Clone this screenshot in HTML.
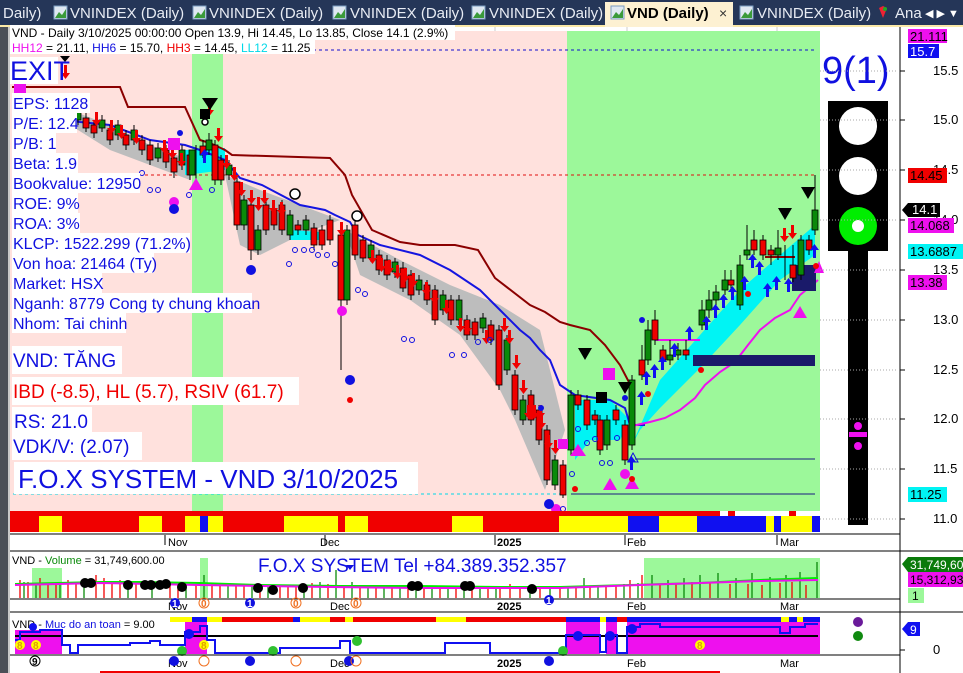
<!DOCTYPE html>
<html><head><meta charset="utf-8"><style>
html,body{margin:0;padding:0;background:#fff;}
body{width:963px;height:673px;overflow:hidden;position:relative;font-family:"Liberation Sans",sans-serif;}
svg{position:absolute;left:0;top:0;}
</style></head><body>
<svg width="963" height="673" viewBox="0 0 963 673" xmlns="http://www.w3.org/2000/svg" font-family="Liberation Sans, sans-serif">
<!-- tab bar -->
<rect x="0" y="0" width="963" height="26" fill="#253658"/>
<rect x="0" y="25" width="963" height="2" fill="#fbe9a8"/>
<g font-size="15" fill="#e8ecf4">
<text x="3" y="18">Daily)</text>
<text x="70" y="18">VNINDEX (Daily)</text>
<text x="209" y="18">VNINDEX (Daily)</text>
<text x="350" y="18">VNINDEX (Daily)</text>
<text x="489" y="18">VNINDEX (Daily)</text>
<text x="757" y="18">VNINDEX (Daily)</text>
<text x="895" y="18">Ana</text>
</g>
<g>
<rect x="54" y="6" width="13" height="13" fill="#dfe8f2" stroke="#7a9cc0"/><path d="M55 18 L59 12 L62 15 L66 9 L66 18Z" fill="#3a9a3a"/>
<rect x="193" y="6" width="13" height="13" fill="#dfe8f2" stroke="#7a9cc0"/><path d="M194 18 L198 12 L201 15 L205 9 L205 18Z" fill="#3a9a3a"/>
<rect x="333" y="6" width="13" height="13" fill="#dfe8f2" stroke="#7a9cc0"/><path d="M334 18 L338 12 L341 15 L345 9 L345 18Z" fill="#3a9a3a"/>
<rect x="472" y="6" width="13" height="13" fill="#dfe8f2" stroke="#7a9cc0"/><path d="M473 18 L477 12 L480 15 L484 9 L484 18Z" fill="#3a9a3a"/>
<rect x="740" y="6" width="13" height="13" fill="#dfe8f2" stroke="#7a9cc0"/><path d="M741 18 L745 12 L748 15 L752 9 L752 18Z" fill="#3a9a3a"/>
</g>
<rect x="605" y="2" width="128" height="25" fill="#fdf1d2"/>
<rect x="611" y="6" width="13" height="13" fill="#dfe8f2" stroke="#7a9cc0"/><path d="M612 18 L616 12 L619 15 L623 9 L623 18Z" fill="#3a9a3a"/>
<text x="627" y="18" font-size="15" font-weight="bold" fill="#000">VND (Daily)</text>
<text x="719" y="18" font-size="14" fill="#333">×</text>
<path d="M879 8 l4 -2 l4 2 l-4 10z" fill="#e23"/><circle cx="885" cy="9" r="2" fill="#2a2"/>
<text x="925" y="17" font-size="11" fill="#fff">◀ ▶ ▼</text>

<!-- left border -->
<rect x="0" y="27" width="8" height="646" fill="#4b4f57"/>
<rect x="8" y="27" width="2" height="646" fill="#c8c8c8"/>

<!-- main pane backgrounds -->
<rect x="10" y="31" width="557" height="480" fill="#ffe1dd"/>
<rect x="567" y="31" width="253" height="480" fill="#9cf89a"/>
<rect x="192" y="31" width="31" height="480" fill="#9cf89a"/>
<g stroke="#ccc" stroke-width="1"><line x1="265" y1="27" x2="265" y2="31"/><line x1="495" y1="27" x2="495" y2="31"/><line x1="627" y1="27" x2="627" y2="31"/><line x1="777" y1="27" x2="777" y2="31"/></g>

<!-- dashed lines -->
<line x1="175" y1="50" x2="815" y2="50" stroke="#1010d0" stroke-dasharray="3,3"/>
<line x1="145" y1="175" x2="815" y2="175" stroke="#e01010" stroke-dasharray="3,3"/>
<line x1="13" y1="494" x2="560" y2="494" stroke="#00d8e8" stroke-dasharray="3,3"/>
<line x1="635" y1="459" x2="815" y2="459" stroke="#1a1a80"/>
<line x1="571" y1="494" x2="815" y2="494" stroke="#1a1a80"/>

<!-- gray fills -->
<path d="M70 110 L110 125 L150 145 L190 160 L190 180 L150 165 L110 150 L70 125Z" fill="#bdbdbd"/>
<path d="M225 175 L260 190 L300 205 L340 220 L300 235 L260 255 L240 245Z" fill="#bdbdbd"/>
<path d="M345 230 L400 260 L450 285 L500 305 L540 330 L565 430 L545 490 L515 420 L500 390 L460 335 L410 300 L360 275Z" fill="#bdbdbd"/>
<!-- cyan fills -->
<path d="M575 400 L610 400 L630 420 L620 440 L590 440 L575 460Z" fill="#00f4f4"/>
<path d="M632 445 L660 380 L700 335 L740 290 L780 255 L815 225 L815 255 L780 280 L740 325 L700 368 L660 408 L640 430Z" fill="#00f4f4"/>
<path d="M185 150 L225 148 L225 170 L185 175Z" fill="#00f4f4"/>
<path d="M290 230 L320 232 L320 240 L290 240Z" fill="#00f4f4"/>

<!-- lines -->
<polyline fill="none" stroke="#8b0000" stroke-width="2" points="12,87 120,87 128,107 185,107 200,140 210,143 225,150 232,155 330,158 345,175 352,195 372,230 400,242 420,245 455,245 478,250 495,278 530,305 545,312 560,322 570,325 590,330 605,345 620,365 632,388"/>
<polyline fill="none" stroke="#1515e0" stroke-width="2" points="15,115 40,117 80,122 110,125 150,140 185,145 200,150 225,160 240,178 262,185 300,205 325,210 335,215 350,222 358,235 380,245 420,255 450,270 480,290 500,310 520,330 530,338 540,350 550,360 560,385 575,395 610,400 625,408 630,425 645,425"/>
<polyline fill="none" stroke="#ee10ee" stroke-width="2" points="632,426 650,422 665,418 680,410 695,398 705,385 720,372 735,362 748,345 760,330 775,318 790,310 800,295 812,285 818,280"/>
<line x1="655" y1="340" x2="700" y2="340" stroke="#ee10ee" stroke-width="2"/>
<line x1="765" y1="257" x2="795" y2="257" stroke="#8b0000" stroke-width="2"/>
<rect x="693" y="355" width="122" height="11" fill="#1a1a6a"/>
<rect x="792" y="265" width="24" height="26" fill="#1a1a6a"/>

<!-- wicks -->
<path stroke="#000" stroke-width="1" fill="none" d="M70 100V130M78 108V125M86 112V132M94 120V138M102 115V132M110 125V145M118 120V140M126 130V150M134 125V145M142 135V155M150 140V165M158 143V162M166 145V168M174 153V178M182 145V170M190 150V180M196 145V180M203 140V158M209 133V155M215 140V185M221 155V185M229 160V180M237 175V230M244 195V230M251 200V260M258 225V255M266 200V235M274 205V230M282 200V235M290 210V240M298 220V235M306 215V235M314 223V250M322 225V250M330 215V245M341 230V370M347 225V305M355 220V260M363 235V262M371 240V262M379 250V275M387 255V280M395 258V278M403 262V292M411 270V300M419 275V295M427 280V305M435 285V325M443 290V315M451 295V325M459 295V325M467 315V340M475 318V340M483 313V333M491 320V345M499 325V390M507 335V375M515 370V415M523 395V425M531 390V425M539 405V445M547 425V485M555 455V490M563 460V498M571 390V455M578 390V410M587 395V430M595 410V425M600 415V455M607 415V450M616 405V425M625 420V465M632 375V450M642 345V380M648 320V365M655 310V345M663 345V365M670 340V365M678 343V360M686 340V360M702 300V330M709 290V318M716 285V305M725 270V295M731 270V290M740 255V310M747 225V260M754 230V255M763 235V260M771 245V265M778 230V260M785 245V280M793 245V282M801 235V280M809 235V255M815 175V235"/>
<!-- red bodies -->
<g fill="#f00000" stroke="#000" stroke-width="0.8">
<rect x="67" y="108" width="6" height="17"/><rect x="83" y="118" width="6" height="10"/><rect x="91" y="125" width="6" height="8"/><rect x="107" y="130" width="6" height="10"/><rect x="123" y="135" width="6" height="10"/><rect x="139" y="140" width="6" height="10"/><rect x="147" y="145" width="6" height="15"/><rect x="163" y="150" width="6" height="12"/><rect x="171" y="158" width="6" height="14"/><rect x="187" y="155" width="6" height="20"/>
<rect x="200" y="146" width="6" height="9"/><rect x="212" y="145" width="6" height="35"/><rect x="218" y="160" width="6" height="20"/><rect x="234" y="182" width="6" height="43"/><rect x="248" y="205" width="6" height="45"/><rect x="263" y="205" width="6" height="25"/><rect x="271" y="210" width="6" height="15"/><rect x="279" y="205" width="6" height="25"/><rect x="295" y="225" width="6" height="5"/><rect x="311" y="228" width="6" height="17"/><rect x="319" y="230" width="6" height="15"/><rect x="327" y="220" width="6" height="20"/><rect x="338" y="235" width="6" height="65"/><rect x="352" y="225" width="6" height="30"/><rect x="360" y="240" width="6" height="18"/><rect x="376" y="255" width="6" height="15"/><rect x="384" y="260" width="6" height="15"/><rect x="400" y="268" width="6" height="20"/><rect x="408" y="275" width="6" height="20"/><rect x="424" y="285" width="6" height="15"/><rect x="432" y="290" width="6" height="30"/><rect x="448" y="300" width="6" height="20"/><rect x="464" y="320" width="6" height="15"/><rect x="472" y="322" width="6" height="13"/><rect x="488" y="325" width="6" height="15"/><rect x="496" y="330" width="6" height="55"/><rect x="512" y="375" width="6" height="35"/><rect x="528" y="395" width="6" height="25"/><rect x="536" y="410" width="6" height="30"/><rect x="544" y="430" width="6" height="50"/><rect x="560" y="465" width="6" height="30"/>
<rect x="575" y="395" width="6" height="10"/><rect x="584" y="400" width="6" height="25"/><rect x="592" y="415" width="6" height="5"/><rect x="597" y="420" width="6" height="30"/><rect x="613" y="410" width="6" height="10"/><rect x="622" y="425" width="6" height="35"/><rect x="639" y="360" width="6" height="15"/><rect x="652" y="320" width="6" height="20"/><rect x="660" y="350" width="6" height="10"/><rect x="683" y="350" width="6" height="5"/><rect x="728" y="280" width="6" height="5"/><rect x="751" y="240" width="6" height="10"/><rect x="760" y="240" width="6" height="15"/><rect x="768" y="250" width="6" height="5"/><rect x="790" y="265" width="6" height="13"/><rect x="806" y="240" width="6" height="10"/>
</g>
<!-- green bodies -->
<g fill="#0a8a0a" stroke="#000" stroke-width="0.8">
<rect x="75" y="112" width="6" height="8"/><rect x="99" y="120" width="6" height="8"/><rect x="115" y="125" width="6" height="10"/><rect x="131" y="130" width="6" height="10"/><rect x="155" y="148" width="6" height="10"/><rect x="179" y="150" width="6" height="15"/><rect x="189" y="150" width="6" height="25"/><rect x="206" y="140" width="6" height="10"/><rect x="226" y="165" width="6" height="10"/><rect x="241" y="200" width="6" height="25"/><rect x="255" y="230" width="6" height="20"/><rect x="287" y="215" width="6" height="20"/><rect x="303" y="220" width="6" height="10"/><rect x="344" y="230" width="6" height="70"/><rect x="368" y="245" width="6" height="13"/><rect x="392" y="262" width="6" height="10"/><rect x="416" y="280" width="6" height="10"/><rect x="440" y="295" width="6" height="15"/><rect x="456" y="300" width="6" height="20"/><rect x="480" y="318" width="6" height="10"/><rect x="504" y="340" width="6" height="30"/><rect x="520" y="400" width="6" height="20"/><rect x="552" y="460" width="6" height="25"/><rect x="568" y="395" width="6" height="55"/><rect x="604" y="420" width="6" height="25"/><rect x="629" y="380" width="6" height="65"/><rect x="645" y="330" width="6" height="30"/><rect x="667" y="355" width="6" height="5"/><rect x="675" y="350" width="6" height="5"/><rect x="699" y="310" width="6" height="15"/><rect x="706" y="300" width="6" height="10"/><rect x="713" y="292" width="6" height="8"/><rect x="722" y="280" width="6" height="10"/><rect x="737" y="265" width="6" height="40"/><rect x="744" y="250" width="6" height="5"/><rect x="775" y="248" width="6" height="7"/><rect x="798" y="240" width="6" height="35"/><rect x="812" y="210" width="6" height="20"/>
</g>
<!-- red arrows -->
<g fill="#f00000">
<path d="M64 65h3v8h3l-4.5 6l-4.5-6h3z"/>
<path d="M95 112h3v8h3l-4.5 6l-4.5-6h3z"/><path d="M110 120h3v8h3l-4.5 6l-4.5-6h3z"/><path d="M120 125h3v8h3l-4.5 6l-4.5-6h3z"/><path d="M135 130h3v8h3l-4.5 6l-4.5-6h3z"/><path d="M163 140h3v8h3l-4.5 6l-4.5-6h3z"/><path d="M171 145h3v8h3l-4.5 6l-4.5-6h3z"/><path d="M180 153h3v8h3l-4.5 6l-4.5-6h3z"/>
<path d="M217 128h3v8h3l-4.5 6l-4.5-6h3z"/><path d="M225 155h3v8h3l-4.5 6l-4.5-6h3z"/><path d="M233 167h3v8h3l-4.5 6l-4.5-6h3z"/><path d="M240 182h3v8h3l-4.5 6l-4.5-6h3z"/><path d="M250 190h3v8h3l-4.5 6l-4.5-6h3z"/><path d="M257 197h3v8h3l-4.5 6l-4.5-6h3z"/><path d="M263 190h3v8h3l-4.5 6l-4.5-6h3z"/><path d="M272 200h3v8h3l-4.5 6l-4.5-6h3z"/><path d="M280 202h3v8h3l-4.5 6l-4.5-6h3z"/>
<path d="M340 222h3v8h3l-4.5 6l-4.5-6h3z"/><path d="M371 250h3v8h3l-4.5 6l-4.5-6h3z"/><path d="M380 258h3v8h3l-4.5 6l-4.5-6h3z"/><path d="M388 260h3v8h3l-4.5 6l-4.5-6h3z"/><path d="M396 265h3v8h3l-4.5 6l-4.5-6h3z"/><path d="M404 268h3v8h3l-4.5 6l-4.5-6h3z"/><path d="M412 273h3v8h3l-4.5 6l-4.5-6h3z"/><path d="M425 282h3v8h3l-4.5 6l-4.5-6h3z"/><path d="M433 290h3v8h3l-4.5 6l-4.5-6h3z"/><path d="M445 300h3v8h3l-4.5 6l-4.5-6h3z"/><path d="M459 318h3v8h3l-4.5 6l-4.5-6h3z"/><path d="M466 320h3v8h3l-4.5 6l-4.5-6h3z"/><path d="M485 330h3v8h3l-4.5 6l-4.5-6h3z"/>
<path d="M503 318h3v8h3l-4.5 6l-4.5-6h3z"/><path d="M508 330h3v8h3l-4.5 6l-4.5-6h3z"/><path d="M515 355h3v8h3l-4.5 6l-4.5-6h3z"/><path d="M522 380h3v8h3l-4.5 6l-4.5-6h3z"/><path d="M527 405h3v8h3l-4.5 6l-4.5-6h3z"/><path d="M533 405h3v8h3l-4.5 6l-4.5-6h3z"/><path d="M539 405h3v8h3l-4.5 6l-4.5-6h3z"/><path d="M540 415h3v8h3l-4.5 6l-4.5-6h3z"/><path d="M547 435h3v8h3l-4.5 6l-4.5-6h3z"/><path d="M554 440h3v8h3l-4.5 6l-4.5-6h3z"/><path d="M208 102h3v8h3l-4.5 6l-4.5-6h3z"/>
<path d="M783 228h3v8h3l-4.5 6l-4.5-6h3z"/><path d="M791 225h3v8h3l-4.5 6l-4.5-6h3z"/>
</g>
<!-- blue arrows -->
<g fill="#1010f0">
<path d="M206 163h-3v-8h-3l4.5-6l4.5 6h-3z"/>
<path d="M643 405h-3v-8h-3l4.5-6l4.5 6h-3z"/><path d="M648 385h-3v-8h-3l4.5-6l4.5 6h-3z"/><path d="M656 378h-3v-8h-3l4.5-6l4.5 6h-3z"/><path d="M664 370h-3v-8h-3l4.5-6l4.5 6h-3z"/><path d="M676 357h-3v-8h-3l4.5-6l4.5 6h-3z"/><path d="M691 340h-3v-8h-3l4.5-6l4.5 6h-3z"/><path d="M708 330h-3v-8h-3l4.5-6l4.5 6h-3z"/><path d="M717 318h-3v-8h-3l4.5-6l4.5 6h-3z"/><path d="M725 308h-3v-8h-3l4.5-6l4.5 6h-3z"/><path d="M734 300h-3v-8h-3l4.5-6l4.5 6h-3z"/><path d="M746 290h-3v-8h-3l4.5-6l4.5 6h-3z"/><path d="M754 268h-3v-8h-3l4.5-6l4.5 6h-3z"/><path d="M761 275h-3v-8h-3l4.5-6l4.5 6h-3z"/><path d="M769 297h-3v-8h-3l4.5-6l4.5 6h-3z"/><path d="M778 290h-3v-8h-3l4.5-6l4.5 6h-3z"/><path d="M790 292h-3v-8h-3l4.5-6l4.5 6h-3z"/><path d="M816 258h-3v-8h-3l4.5-6l4.5 6h-3z"/><path d="M633 470h-3v-8h-3l4.5-6l4.5 6h-3z"/>
</g>
<!-- markers -->
<g fill="#ee10ee">
<rect x="14" y="83" width="12" height="12"/><rect x="168" y="138" width="12" height="12"/><rect x="603" y="368" width="12" height="12"/><rect x="558" y="439" width="10" height="10"/>
<path d="M196 178l-7 12h14z"/><path d="M578 444l-8 12h16z"/><path d="M610 478l-7 12h14z"/><path d="M632 477l-7 12h14z"/><path d="M800 306l-7 12h14z"/><path d="M819 261l-5 12h10z"/>
<circle cx="174" cy="202" r="5"/><circle cx="342" cy="311" r="5"/><circle cx="625" cy="474" r="5"/><circle cx="556" cy="509" r="5"/>
</g>
<g fill="#000">
<path d="M202 98h16l-8 12z"/><rect x="200" y="109" width="10" height="10"/>
<path d="M578 348h14l-7 12z"/><path d="M618 382h14l-7 12z"/><rect x="596" y="392" width="11" height="11"/>
<path d="M778 208h14l-7 12z"/><path d="M801 187h14l-7 12z"/>
<path d="M60 56h10l-5 6z"/>
</g>
<g fill="#fff" stroke="#000" stroke-width="1.5"><circle cx="295" cy="194" r="5"/><circle cx="357" cy="216" r="5"/><circle cx="205" cy="122" r="3"/></g>
<g fill="#1010e0"><circle cx="174" cy="209" r="5"/><circle cx="251" cy="270" r="5"/><circle cx="350" cy="380" r="5"/><circle cx="549" cy="504" r="5"/><circle cx="642" cy="320" r="3"/><circle cx="625" cy="398" r="3"/><circle cx="180" cy="133" r="3"/><circle cx="541" cy="408" r="3"/></g>
<g fill="#f00000"><circle cx="350" cy="400" r="3"/><circle cx="648" cy="394" r="3"/><circle cx="701" cy="370" r="3"/><circle cx="575" cy="489" r="3"/><circle cx="632" cy="479" r="3"/><circle cx="748" cy="294" r="3"/><circle cx="816" cy="266" r="3"/></g>
<g fill="none" stroke="#1010e0" stroke-width="1"><circle cx="150" cy="190" r="2.5"/><circle cx="158" cy="190" r="2.5"/><circle cx="142" cy="173" r="2.5"/><circle cx="189" cy="195" r="2.5"/><circle cx="212" cy="190" r="2.5"/><circle cx="295" cy="250" r="2.5"/><circle cx="304" cy="250" r="2.5"/><circle cx="312" cy="250" r="2.5"/><circle cx="289" cy="264" r="2.5"/><circle cx="318" cy="255" r="2.5"/><circle cx="327" cy="255" r="2.5"/><circle cx="335" cy="264" r="2.5"/><circle cx="358" cy="290" r="2.5"/><circle cx="365" cy="294" r="2.5"/><circle cx="404" cy="339" r="2.5"/><circle cx="412" cy="340" r="2.5"/><circle cx="452" cy="355" r="2.5"/><circle cx="464" cy="355" r="2.5"/><circle cx="478" cy="342" r="2.5"/><circle cx="490" cy="340" r="2.5"/><circle cx="578" cy="429" r="2.5"/><circle cx="587" cy="443" r="2.5"/><circle cx="595" cy="439" r="2.5"/><circle cx="602" cy="463" r="2.5"/><circle cx="610" cy="463" r="2.5"/><circle cx="572" cy="474" r="2.5"/><circle cx="617" cy="438" r="2.5"/><circle cx="563" cy="509" r="2.5"/></g>
<path d="M633 453l-5 9h10z" fill="none" stroke="#1010e0"/>

<!-- bottom color band -->
<rect x="10" y="511" width="710" height="21" fill="#f00000"/>
<rect x="720" y="516" width="100" height="16" fill="#f00000"/>
<rect x="728" y="511" width="7" height="5" fill="#f00000"/><rect x="789" y="511" width="7" height="5" fill="#f00000"/>
<g fill="#ffff00"><rect x="39" y="516" width="23" height="16"/><rect x="139" y="516" width="23" height="16"/><rect x="185" y="516" width="38" height="16"/><rect x="284" y="516" width="54" height="16"/><rect x="345" y="516" width="23" height="16"/><rect x="452" y="516" width="31" height="16"/><rect x="559" y="516" width="69" height="16"/><rect x="659" y="516" width="38" height="16"/><rect x="766" y="516" width="8" height="16"/><rect x="781" y="516" width="31" height="16"/></g>
<g fill="#1010f0"><rect x="200" y="516" width="8" height="16"/><rect x="628" y="516" width="31" height="16"/><rect x="697" y="516" width="69" height="16"/><rect x="774" y="516" width="7" height="16"/><rect x="812" y="516" width="8" height="16"/></g>
<line x1="10" y1="534" x2="900" y2="534" stroke="#000"/>
<g font-size="11" fill="#000"><text x="168" y="546">Nov</text><text x="320" y="546">Dec</text><text x="497" y="546" font-weight="bold">2025</text><text x="627" y="546">Feb</text><text x="780" y="546">Mar</text></g>
<g stroke="#000"><line x1="165" y1="535" x2="165" y2="545"/><line x1="325" y1="535" x2="325" y2="545"/><line x1="495" y1="535" x2="495" y2="545"/><line x1="625" y1="535" x2="625" y2="545"/><line x1="777" y1="535" x2="777" y2="545"/></g>
<line x1="10" y1="551" x2="963" y2="551" stroke="#000"/>

<!-- header text -->
<rect x="10" y="25" width="445" height="15" fill="#fff"/>
<text x="12" y="37" font-size="12" fill="#000">VND - Daily 3/10/2025 00:00:00 Open 13.9, Hi 14.45, Lo 13.85, Close 14.1 (2.9%)</text>
<rect x="10" y="40" width="305" height="14" fill="#fff"/>
<text x="12" y="52" font-size="12" fill="#000"><tspan fill="#ee10ee">HH12</tspan> = 21.11, <tspan fill="#1010e0">HH6</tspan> = 15.70, <tspan fill="#f00000">HH3</tspan> = 14.45, <tspan fill="#00d8e8">LL12</tspan> = 11.25</text>

<!-- info labels -->
<g fill="#fff">
<rect x="10" y="57" width="48" height="27"/>
<rect x="12" y="93" width="78" height="20"/><rect x="12" y="113" width="65" height="20"/><rect x="12" y="133" width="44" height="20"/><rect x="12" y="153" width="66" height="20"/><rect x="12" y="173" width="128" height="20"/><rect x="12" y="193" width="66" height="20"/><rect x="12" y="213" width="68" height="20"/><rect x="12" y="233" width="178" height="20"/><rect x="12" y="253" width="142" height="20"/><rect x="12" y="273" width="90" height="20"/><rect x="12" y="293" width="240" height="20"/><rect x="12" y="313" width="114" height="20"/>
<rect x="12" y="346" width="110" height="28"/><rect x="12" y="377" width="287" height="28"/><rect x="12" y="407" width="80" height="28"/><rect x="12" y="432" width="130" height="28"/><rect x="14" y="462" width="404" height="32"/>
</g>
<text x="10" y="80" font-size="27" fill="#1010e0">EXIT</text>
<g font-size="16" fill="#1010e0">
<text x="13" y="109">EPS: 1128</text><text x="13" y="129">P/E: 12.4</text><text x="13" y="149">P/B: 1</text><text x="13" y="169">Beta: 1.9</text><text x="13" y="189">Bookvalue: 12950</text><text x="13" y="209">ROE: 9%</text><text x="13" y="229">ROA: 3%</text><text x="13" y="249">KLCP: 1522.299 (71.2%)</text><text x="13" y="269">Von hoa: 21464 (Ty)</text><text x="13" y="289">Market: HSX</text><text x="13" y="309">Nganh: 8779 Cong ty chung khoan</text><text x="13" y="329">Nhom: Tai chinh</text>
</g>
<g font-size="19">
<text x="13" y="367" fill="#1010e0">VND: TĂNG</text>
<text x="13" y="398" fill="#f00000">IBD (-8.5), HL (5.7), RSIV (61.7)</text>
<text x="14" y="428" fill="#1010e0">RS: 21.0</text>
<text x="13" y="453" fill="#1010e0">VDK/V:  (2.07)</text>
</g>
<text x="18" y="488" font-size="26" fill="#1010e0">F.O.X SYSTEM - VND 3/10/2025</text>

<!-- 9(1) and traffic light -->
<text x="822" y="83" font-size="38" fill="#1010e0">9(1)</text>
<rect x="828" y="101" width="60" height="150" fill="#000"/>
<circle cx="858" cy="126" r="19" fill="#fff"/><circle cx="858" cy="176" r="19" fill="#fff"/><circle cx="858" cy="226" r="19" fill="#00ee00"/><circle cx="858" cy="226" r="6" fill="#fff"/>
<rect x="848" y="251" width="20" height="274" fill="#000"/>
<circle cx="858" cy="426" r="4" fill="#ee10ee"/><rect x="849" y="432" width="18" height="5" fill="#ee10ee"/><circle cx="858" cy="446" r="4" fill="#ee10ee"/>

<!-- right axis -->
<line x1="900" y1="27" x2="900" y2="673" stroke="#000"/>
<g stroke="#aaa" stroke-dasharray="1,2"><line x1="820" y1="71" x2="898" y2="71"/><line x1="820" y1="120" x2="898" y2="120"/><line x1="820" y1="170" x2="898" y2="170"/><line x1="820" y1="220" x2="898" y2="220"/><line x1="820" y1="270" x2="898" y2="270"/><line x1="820" y1="320" x2="898" y2="320"/><line x1="820" y1="370" x2="898" y2="370"/><line x1="820" y1="419" x2="898" y2="419"/><line x1="820" y1="469" x2="898" y2="469"/><line x1="820" y1="519" x2="898" y2="519"/></g>
<g stroke="#000"><line x1="900" y1="71" x2="905" y2="71"/><line x1="900" y1="120" x2="905" y2="120"/><line x1="900" y1="170" x2="905" y2="170"/><line x1="900" y1="220" x2="905" y2="220"/><line x1="900" y1="270" x2="905" y2="270"/><line x1="900" y1="320" x2="905" y2="320"/><line x1="900" y1="370" x2="905" y2="370"/><line x1="900" y1="419" x2="905" y2="419"/><line x1="900" y1="469" x2="905" y2="469"/><line x1="900" y1="519" x2="905" y2="519"/></g>
<g font-size="13" fill="#000"><text x="933" y="75">15.5</text><text x="933" y="124">15.0</text><text x="933" y="174">14.5</text><text x="933" y="224">14.0</text><text x="933" y="274">13.5</text><text x="933" y="324">13.0</text><text x="933" y="374">12.5</text><text x="933" y="423">12.0</text><text x="933" y="473">11.5</text><text x="933" y="523">11.0</text></g>
<g font-size="13">
<rect x="908" y="29" width="39" height="14" fill="#ee10ee"/><text x="910" y="41" fill="#000">21.111</text>
<rect x="908" y="44" width="31" height="14" fill="#1010f0"/><text x="910" y="56" fill="#fff">15.7</text>
<rect x="908" y="168" width="39" height="15" fill="#f00000"/><text x="910" y="180" fill="#000">14.45</text>
<path d="M902 210 L908 203 H940 V217 H908Z" fill="#000"/><text x="912" y="214" fill="#fff">14.1</text>
<rect x="908" y="218" width="46" height="15" fill="#ee10ee"/><text x="910" y="230" fill="#000">14.068</text>
<rect x="908" y="244" width="55" height="15" fill="#00f4f4"/><text x="910" y="256" fill="#000">13.6887</text>
<rect x="908" y="275" width="39" height="15" fill="#ee10ee"/><text x="910" y="287" fill="#000">13.38</text>
<rect x="908" y="487" width="39" height="15" fill="#00f4f4"/><text x="910" y="499" fill="#000">11.25</text>
</g>

<!-- volume pane -->
<g fill="#9cf89a"><rect x="32" y="568" width="30" height="30"/><rect x="200" y="558" width="8" height="40"/><rect x="644" y="558" width="176" height="40"/></g>
<text x="12" y="564" font-size="11" fill="#000">VND - <tspan fill="#0a8a0a">Volume</tspan> = 31,749,600.00</text>
<text x="258" y="572" font-size="19" fill="#1010e0">F.O.X SYSTEM Tel +84.389.352.357</text>
<path stroke="#f00000" stroke-width="1.3" d="M20 598V580M28 598V582M40 598V578M48 598V583M56 598V585M68 598V580M76 598V584M96 598V575M104 598V578M112 598V582M120 598V580M136 598V584M170 598V582M178 598V586M196 598V584M212 598V583M220 598V586M236 598V584M244 598V585M260 598V585M280 598V586M288 598V586M296 598V585M312 598V583M328 598V584M344 598V585M360 598V586M376 598V586M392 598V587M408 598V586M424 598V587M440 598V588M456 598V588M472 598V586M488 598V587M500 598V588M510 598V584M520 598V586M540 598V586M560 598V587M576 598V587M590 598V586M606 598V587M616 598V585M630 598V580M642 598V575M660 598V585M676 598V583M692 598V582M710 598V583M730 598V584M748 598V584M762 598V585M780 598V583M792 598V582M806 598V585"/>
<path stroke="#0a8a0a" stroke-width="1.3" d="M24 598V582M36 598V584M60 598V583M84 598V580M128 598V583M152 598V582M186 598V585M204 598V575M228 598V585M252 598V585M268 598V585M304 598V585M320 598V582M336 598V570M352 598V582M368 598V586M384 598V586M400 598V587M416 598V586M432 598V587M448 598V588M464 598V586M480 598V587M496 598V587M530 598V588M550 598V586M568 598V587M584 598V578M598 598V586M624 598V584M638 598V583M652 598V575M668 598V580M684 598V578M700 598V575M718 598V573M736 598V578M752 598V573M770 598V577M786 598V575M800 598V572M817 598V562"/>
<polyline fill="none" stroke="#00ee00" stroke-width="2" points="15,584 100,582 140,582 200,583 260,585 340,586 420,586 500,587 560,587 630,585 700,583 760,580 818,578"/>
<polyline fill="none" stroke="#ee10ee" stroke-width="2" points="15,585 100,583 200,585 330,587 420,588 560,588 640,585 700,583 760,581 818,580"/>
<g fill="#000"><circle cx="85" cy="583" r="5"/><circle cx="91" cy="583" r="5"/><circle cx="128" cy="585" r="5"/><circle cx="145" cy="585" r="5"/><circle cx="151" cy="585" r="5"/><circle cx="160" cy="585" r="5"/><circle cx="166" cy="584" r="5"/><circle cx="182" cy="587" r="5"/><circle cx="258" cy="588" r="5"/><circle cx="273" cy="590" r="5"/><circle cx="303" cy="588" r="5"/><circle cx="412" cy="586" r="5"/><circle cx="418" cy="586" r="5"/><circle cx="465" cy="586" r="5"/><circle cx="470" cy="586" r="5"/><circle cx="532" cy="589" r="5"/></g>
<path d="M346 565h8l-4 5z" fill="#1010e0"/>
<line x1="10" y1="599" x2="900" y2="599" stroke="#000"/>
<g font-size="11" fill="#000"><text x="168" y="610">Nov</text><text x="330" y="610">Dec</text><text x="497" y="610" font-weight="bold">2025</text><text x="627" y="610">Feb</text><text x="780" y="610">Mar</text></g>
<g font-size="10" font-weight="bold"><circle cx="175" cy="603" r="5" fill="#1010e0"/><text x="172" y="607" fill="#fff">1</text><circle cx="204" cy="603" r="5" fill="none" stroke="#f07020"/><text x="201" y="607" fill="#f07020">0</text><circle cx="250" cy="603" r="5" fill="#1010e0"/><text x="247" y="607" fill="#fff">1</text><circle cx="296" cy="603" r="5" fill="none" stroke="#f07020"/><text x="293" y="607" fill="#f07020">0</text><circle cx="356" cy="603" r="5" fill="none" stroke="#f07020"/><text x="353" y="607" fill="#f07020">0</text><circle cx="549" cy="600" r="5" fill="#1010e0"/><text x="546" y="604" fill="#fff">1</text></g>
<rect x="908" y="557" width="55" height="15" fill="#0a7a0a"/><path d="M902 564 L908 557 V572Z" fill="#0a7a0a"/><text x="910" y="569" font-size="12" fill="#fff">31,749,60</text>
<rect x="908" y="572" width="55" height="15" fill="#ee10ee"/><text x="910" y="584" font-size="12" fill="#000">15,312,93</text>
<rect x="908" y="588" width="16" height="15" fill="#9cf89a"/><text x="912" y="600" font-size="12" fill="#000">1</text>
<line x1="10" y1="612" x2="963" y2="612" stroke="#000"/>

<!-- safety pane -->
<g fill="#ee10ee"><rect x="15" y="630" width="47" height="24"/><rect x="185" y="617" width="22" height="37"/><rect x="566" y="617" width="34" height="37"/><rect x="606" y="617" width="11" height="37"/><rect x="627" y="617" width="193" height="37"/></g>
<rect x="170" y="617" width="650" height="5" fill="#f00000"/>
<g fill="#1010f0"><rect x="192" y="617" width="15" height="5"/><rect x="293" y="617" width="7" height="5"/><rect x="566" y="617" width="34" height="5"/><rect x="606" y="617" width="11" height="5"/><rect x="627" y="617" width="193" height="5"/></g>
<g fill="#ffff00"><rect x="170" y="617" width="22" height="5"/><rect x="207" y="617" width="15" height="5"/><rect x="300" y="617" width="30" height="5"/><rect x="345" y="617" width="8" height="5"/><rect x="436" y="617" width="30" height="5"/><rect x="600" y="617" width="6" height="5"/><rect x="781" y="617" width="8" height="5"/><rect x="797" y="617" width="6" height="5"/></g>
<text x="12" y="628" font-size="11" fill="#000">VND - <tspan fill="#1010e0">Muc do an toan</tspan> = 9.00</text>
<line x1="15" y1="636" x2="818" y2="636" stroke="#000" stroke-width="2"/>
<polyline fill="none" stroke="#1010f0" stroke-width="2" points="15,640 20,640 20,632 40,632 40,630 62,630 62,645 70,645 70,653 78,653 78,645 130,645 130,643 150,643 150,641 160,641 160,645 185,645 185,632 200,632 200,626 207,626 207,640 215,640 215,653 280,653 280,648 340,648 340,641 350,641 350,653 445,653 445,643 490,643 490,653 566,653 566,635 600,635 600,652 606,652 606,635 617,635 617,653 627,653 627,627 640,627 640,624 660,624 660,627 780,627 780,633 790,633 790,627 805,627 805,624 818,624"/>
<g fill="#1010f0"><circle cx="189" cy="634" r="5"/><circle cx="578" cy="636" r="5"/><circle cx="610" cy="636" r="5"/><circle cx="632" cy="629" r="5"/><circle cx="33" cy="627" r="4"/></g>
<g fill="#30c030"><circle cx="182" cy="651" r="5"/><circle cx="273" cy="651" r="5"/><circle cx="357" cy="641" r="5"/><circle cx="563" cy="651" r="5"/></g>
<g font-size="10" font-weight="bold" fill="#e0a000"><circle cx="20" cy="645" r="5" fill="#ffff00"/><circle cx="36" cy="645" r="5" fill="#ffff00"/><circle cx="204" cy="645" r="5" fill="#ffff00"/><circle cx="700" cy="645" r="5" fill="#ffff00"/><text x="17" y="649">8</text><text x="33" y="649">8</text><text x="201" y="649">8</text><text x="697" y="649">8</text></g>
<circle cx="858" cy="622" r="5" fill="#6a1a9a"/><circle cx="858" cy="636" r="5" fill="#108a10"/>
<path d="M902 629 L908 622 H920 V636 H908Z" fill="#1010f0"/><text x="910" y="634" font-size="12" fill="#fff">9</text>
<line x1="900" y1="650" x2="905" y2="650" stroke="#000"/><text x="933" y="654" font-size="13" fill="#000">0</text>
<line x1="10" y1="655" x2="900" y2="655" stroke="#000"/>
<g font-size="11" fill="#000"><text x="168" y="667">Nov</text><text x="330" y="667">Dec</text><text x="497" y="667" font-weight="bold">2025</text><text x="627" y="667">Feb</text><text x="780" y="667">Mar</text></g>
<g font-size="10" font-weight="bold"><circle cx="35" cy="661" r="5" fill="none" stroke="#000"/><text x="32" y="665" fill="#000">9</text><circle cx="174" cy="661" r="5" fill="#1010e0"/><circle cx="204" cy="661" r="5" fill="none" stroke="#f07020"/><circle cx="250" cy="661" r="5" fill="#1010e0"/><circle cx="296" cy="661" r="5" fill="none" stroke="#f07020"/><circle cx="349" cy="661" r="5" fill="#1010e0"/><circle cx="356" cy="661" r="5" fill="none" stroke="#f07020"/><circle cx="549" cy="661" r="5" fill="#1010e0"/></g>
<rect x="100" y="671" width="620" height="2" fill="#f00000"/>
</svg>
</body></html>
